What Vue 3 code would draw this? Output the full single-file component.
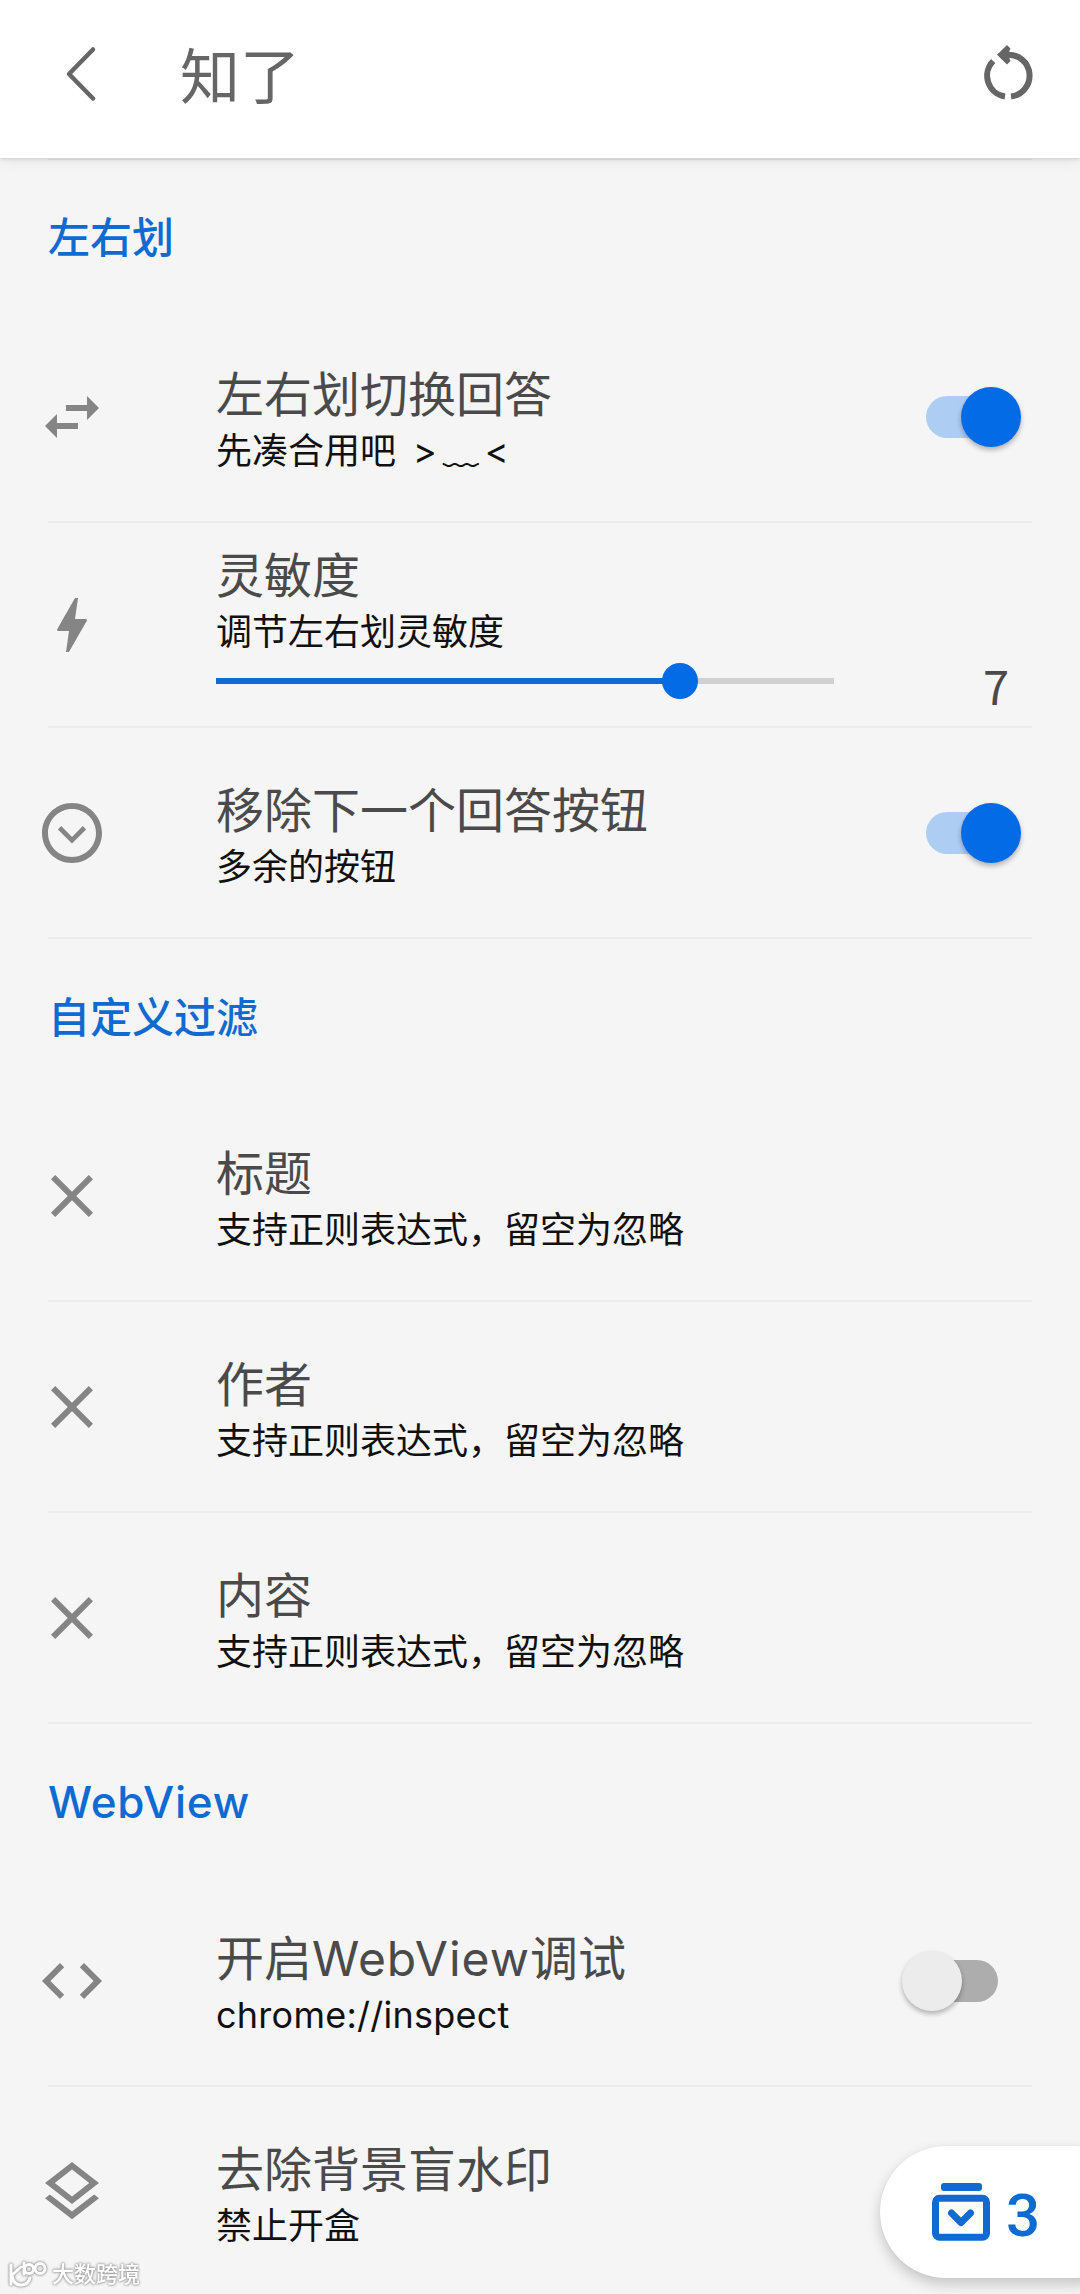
<script setup>
import { ref } from 'vue'

const paths = {
  swap: 'M6.99 11 3 15l3.99 4v-3H14v-2H6.99v-3zM21 9l-3.99-4v3H10v2h7.01v3L21 9z',
  bolt: 'M11 21h-1l1-7H7.5c-.58 0-.57-.32-.38-.66.19-.34.05-.08.07-.12C8.48 10.94 10.42 7.54 13 3h1l-1 7h3.5c.49 0 .56.33.47.51l-.07.15C12.96 17.55 11 21 11 21z',
  expand: 'M12 4c4.41 0 8 3.59 8 8s-3.59 8-8 8-8-3.59-8-8 3.59-8 8-8m0-2C6.48 2 2 6.48 2 12s4.48 10 10 10 10-4.48 10-10S17.52 2 12 2zm0 13.5-4.7-4.7 1.1-1.1 3.6 3.6 3.6-3.6 1.1 1.1z',
  close: 'M19 6.41 17.59 5 12 10.59 6.41 5 5 6.41 10.59 12 5 17.59 6.41 19 12 13.41 17.59 19 19 17.59 13.41 12z',
  code: 'M9.4 16.6 4.8 12l4.6-4.6L8 6l-6 6 6 6 1.4-1.4zm5.2 0 4.6-4.6-4.6-4.6L16 6l6 6-6 6-1.4-1.4z',
  layers: 'm11.99 18.54-7.37-5.73L3 14.07l9 7 9-7-1.63-1.27-7.38 5.74zM12 16l7.36-5.73L21 9l-9-7-9 7 1.63 1.27L12 16zm0-11.47L17.74 9 12 13.47 6.26 9 12 4.53z',
}

const filterHint = '支持正则表达式，留空为忽略'

const sections = ref([
  {
    name: '左右划',
    items: [
      { icon: 'swap', title: ['左右划切换回答'], note: '先凑合用吧', face: ['>', '﹏', '<'], on: true },
      { icon: 'bolt', title: ['灵敏度'], note: '调节左右划灵敏度', value: 7, percent: 75 },
      { icon: 'expand', title: ['移除下一个回答按钮'], note: '多余的按钮', on: true },
    ],
  },
  {
    name: '自定义过滤',
    items: [
      { icon: 'close', title: ['标题'], note: filterHint },
      { icon: 'close', title: ['作者'], note: filterHint },
      { icon: 'close', title: ['内容'], note: filterHint },
    ],
  },
  {
    name: 'WebView',
    latin: true,
    items: [
      { icon: 'code', title: ['开启', 'WebView', '调试'], note: 'chrome://inspect', latin: true, on: false },
      { icon: 'layers', title: ['去除背景盲水印'], note: '禁止开盒' },
    ],
  },
])
</script>

<template>
  <div class="screen">
    <header class="bar">
      <svg class="back" viewBox="0 0 36 60"><path d="M29 4.500 5 29l24 24.500" /></svg>
      <h1>知了</h1>
      <svg class="reset" viewBox="0 0 60 60">
        <path class="ring" d="M33 51.5A21 21 0 0 0 29 9.7" />
        <path class="ring" d="M27 51.5A21 21 0 0 1 15.2 16" />
        <path class="head" d="M19 9.7 29 0l3.5 3.5-2.5 6 2.5 6.5-3.5 3.6z" />
      </svg>
    </header>

    <main>
      <section v-for="s in sections" :key="s.name">
        <h2 :class="{ latin: s.latin }">{{ s.name }}</h2>
        <div v-for="item in s.items" :key="item.title[0]" class="row" :class="{ compact: item.value }">
          <svg class="icon" viewBox="0 0 24 24"><path :d="paths[item.icon]" /></svg>
          <div class="text">
            <div class="title">
              <span v-for="(part, i) in item.title" :key="part" :class="{ wide: i === 1 }">{{ part }}</span>
            </div>
            <div class="note" :class="{ latin: item.latin }">
              <span>{{ item.note }}</span>
              <span v-if="item.face" class="face"><i v-for="c in item.face" :key="c">{{ c }}</i></span>
            </div>
            <div v-if="item.value" class="slider">
              <div class="fill" :style="{ width: item.percent + '%' }"></div>
              <div class="knob"></div>
            </div>
          </div>
          <div v-if="item.value" class="value">{{ item.value }}</div>
          <div v-if="item.on !== undefined" class="switch" :class="{ on: item.on }">
            <div class="thumb"></div>
          </div>
        </div>
      </section>
    </main>

    <div class="fab">
      <svg viewBox="0 0 58 58">
        <rect x="9" y="0" width="41" height="8" rx="3" />
        <rect class="box" x="3.5" y="15.2" width="51" height="39" rx="4" />
        <path class="tick" d="m19.5 30 9.5 9.5 9.5-9.5" />
      </svg>
      <span>3</span>
    </div>

    <div class="mark">
      <svg viewBox="0 0 42 28">
        <path d="M4 5v19M14 7 5 15q1 10 9 10 7 0 9-7M17 3v11" />
        <circle cx="22" cy="9" r="4.6" />
        <circle cx="33" cy="8.5" r="5" />
      </svg>
      <span>大数跨境</span>
    </div>
  </div>
</template>

<style>
body {
  margin: 0;
  background: #f5f5f5;
}
</style>

<style scoped>
.screen {
  position: relative;
  width: 1080px;
  height: 2294px;
  overflow: hidden;
  background: #f5f5f5;
  font-family: Inter, "Noto Sans CJK SC", sans-serif;
}
h1,
h2 {
  margin: 0;
}
.bar {
  position: relative;
  display: flex;
  align-items: center;
  box-sizing: border-box;
  height: 158px;
  padding: 0 42px 8px 64px;
  background: #fff;
  box-shadow: 0 1px 4px rgba(0, 0, 0, 0.14), 0 4px 14px rgba(0, 0, 0, 0.06);
}
.bar::after {
  content: "";
  position: absolute;
  left: 48px;
  right: 48px;
  bottom: -2px;
  height: 2px;
  background: #d4d4d4;
}
.back {
  width: 36px;
  height: 60px;
  fill: none;
  stroke: #666;
  stroke-width: 4.5;
  stroke-linecap: round;
  stroke-linejoin: round;
}
h1 {
  flex: 1;
  margin: 3px 0 0 80px;
  font-size: 60px;
  font-weight: 400;
  line-height: 80px;
  color: #666;
}
.reset {
  width: 60px;
  height: 60px;
  overflow: visible;
}
.ring {
  fill: none;
  stroke: #666;
  stroke-width: 6;
}
.head {
  fill: #666;
}
h2 {
  height: 152px;
  padding-left: 48px;
  font-size: 42px;
  font-weight: 500;
  line-height: 157px;
  color: #0f6bd2;
}
h2.latin {
  font-size: 44px;
  letter-spacing: 0.8px;
}
section:first-child h2 {
  height: 154px;
  line-height: 159px;
}
.row {
  display: flex;
  align-items: center;
  box-sizing: border-box;
  height: 211px;
  margin: 0 48px;
  border-bottom: 2px solid #ececec;
}
.row.compact {
  height: 205px;
}
.icon {
  flex: none;
  width: 72px;
  height: 72px;
  margin: 0 108px 0 -12px;
  fill: #858585;
}
.text {
  flex: 1;
  padding-top: 7px;
}
.compact .text {
  align-self: flex-start;
  padding-top: 22px;
}
.title {
  display: flex;
  font-size: 48px;
  line-height: 62px;
  color: #4a4a4a;
}
.wide {
  letter-spacing: 1px;
}
.note {
  display: flex;
  font-size: 36px;
  line-height: 50px;
  color: #111;
}
.note.latin {
  letter-spacing: 0.25px;
}
.face {
  display: flex;
  gap: 6px;
  margin-left: 17px;
}
.face i {
  font-style: normal;
}
.slider {
  display: flex;
  align-items: center;
  width: 618px;
  height: 36px;
  margin-top: 6px;
  background: linear-gradient(#d0d0d0, #d0d0d0) center / 100% 6px no-repeat;
}
.fill {
  height: 6px;
  background: #0f6bd2;
}
.knob {
  flex: none;
  width: 36px;
  height: 36px;
  margin-left: -18px;
  border-radius: 50%;
  background: #046be6;
}
.value {
  align-self: flex-end;
  margin-bottom: 10px;
  padding-right: 23px;
  font-family: "Noto Sans CJK SC", sans-serif;
  font-size: 47px;
  line-height: 62px;
  color: #4a4a4a;
}
.switch {
  display: flex;
  align-items: center;
  width: 72px;
  height: 42px;
  margin-right: 34px;
  border-radius: 21px;
  background: #adadad;
}
.thumb {
  flex: none;
  width: 60px;
  height: 60px;
  margin-left: -24px;
  border-radius: 50%;
  background: #ececec;
  box-shadow: 0 3px 5px rgba(0, 0, 0, 0.28);
}
.switch.on {
  background: #adcdf3;
}
.switch.on .thumb {
  margin-left: 35px;
  background: #046be6;
}
.fab {
  position: absolute;
  left: 880px;
  top: 2146px;
  display: flex;
  align-items: center;
  box-sizing: border-box;
  width: 260px;
  height: 132px;
  padding-left: 52px;
  border-radius: 66px;
  background: #fff;
  box-shadow: 0 6px 14px rgba(0, 0, 0, 0.2), 0 0 2px rgba(0, 0, 0, 0.06);
}
.fab svg {
  width: 58px;
  height: 58px;
  fill: #0f6bd2;
}
.fab .box,
.fab .tick {
  fill: none;
  stroke: #0f6bd2;
  stroke-width: 7;
}
.fab .tick {
  stroke-linecap: round;
  stroke-linejoin: round;
}
.fab span {
  margin: 7px 0 0 16px;
  font-family: Roboto, sans-serif;
  font-size: 60px;
  font-weight: 500;
  line-height: 60px;
  color: #0f6bd2;
}
.mark {
  position: absolute;
  left: 7px;
  top: 2259px;
  display: flex;
  align-items: center;
  gap: 3px;
  filter: drop-shadow(0 0 1px #999) drop-shadow(0 0 1px #aaa);
  color: #fff;
  font-size: 22px;
  font-weight: 500;
  line-height: 30px;
}
.mark svg {
  width: 42px;
  height: 28px;
  fill: none;
  stroke: #fff;
  stroke-width: 3;
  stroke-linecap: round;
}
</style>
